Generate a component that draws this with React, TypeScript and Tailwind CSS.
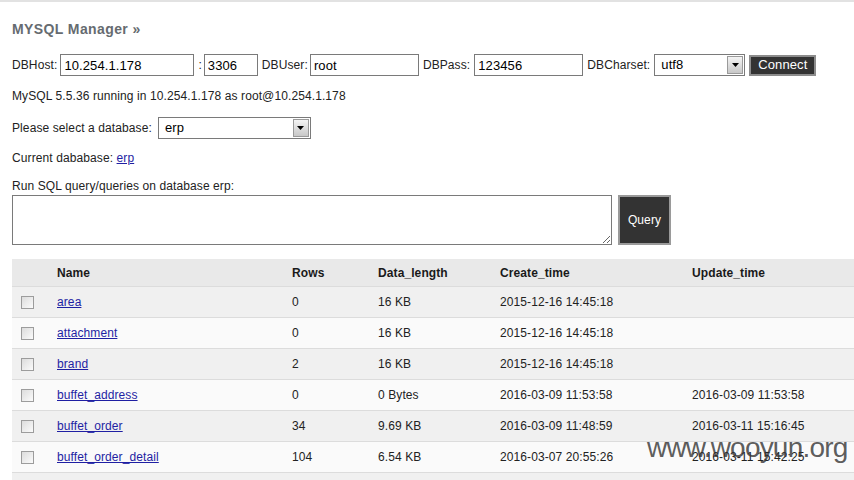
import React from 'react';

type Row = { name: string; rows: string; size: string; created: string; updated: string };

const tables: Row[] = [
  { name: 'area', rows: '0', size: '16 KB', created: '2015-12-16 14:45:18', updated: '' },
  { name: 'attachment', rows: '0', size: '16 KB', created: '2015-12-16 14:45:18', updated: '' },
  { name: 'brand', rows: '2', size: '16 KB', created: '2015-12-16 14:45:18', updated: '' },
  { name: 'buffet_address', rows: '0', size: '0 Bytes', created: '2016-03-09 11:53:58', updated: '2016-03-09 11:53:58' },
  { name: 'buffet_order', rows: '34', size: '9.69 KB', created: '2016-03-09 11:48:59', updated: '2016-03-11 15:16:45' },
  { name: 'buffet_order_detail', rows: '104', size: '6.54 KB', created: '2016-03-07 20:55:26', updated: '2016-03-11 15:42:25' },
];

const cols = 'grid grid-cols-[45px_235px_86px_122px_192px_1fr] items-center';

function TextBox({ value, width }: { value: string; width: string }) {
  return (
    <input
      readOnly
      value={value}
      className={`${width} h-[22px] border border-[#7a7a7a] bg-white px-[3px] text-[13px] text-black outline-none`}
    />
  );
}

function Dropdown({ value, width }: { value: string; width: string }) {
  return (
    <div className={`${width} flex h-[22px] items-stretch border border-[#7a7a7a] bg-white`}>
      <span className="flex-1 pl-[6px] text-[13px] leading-[20px] text-black">{value}</span>
      <span className="m-px flex w-[16px] items-center justify-center border border-[#9a9a9a] bg-gradient-to-b from-[#f4f4f4] to-[#c8c8c8]">
        <svg width="7" height="4" viewBox="0 0 7 4">
          <path d="M0 0h7L3.5 4z" fill="#000" />
        </svg>
      </span>
    </div>
  );
}

function CheckBox() {
  return <span className="block h-[13px] w-[13px] border border-[#9c9c9c] bg-gradient-to-br from-[#dcdcdc] to-[#fbfbfb]" />;
}

export default function App() {
  return (
    <div className="relative h-[480px] w-[854px] overflow-hidden bg-white text-[12px] tracking-[0.1px] text-[#222] [font-family:'Liberation_Sans',Arial,sans-serif]">
      <div className="border-t-2 border-[#e2e2e2] pl-3">
        {/* Title */}
        <h1 className="mt-[18px] text-[14px] leading-[18px] font-bold tracking-[0.4px] text-[#666b70]">MYSQL Manager »</h1>

        {/* Connection form */}
        <div className="mt-[16px] flex h-[22px] items-center">
          <span>DBHost:</span>
          <span className="ml-[3px]"><TextBox value="10.254.1.178" width="w-[134px]" /></span>
          <span className="ml-[4px]">:</span>
          <span className="ml-[2px]"><TextBox value="3306" width="w-[54px]" /></span>
          <span className="ml-[4px]">DBUser:</span>
          <span className="ml-[2px]"><TextBox value="root" width="w-[109px]" /></span>
          <span className="ml-[4px]">DBPass:</span>
          <span className="ml-[4px]"><TextBox value="123456" width="w-[109px]" /></span>
          <span className="ml-[4px]">DBCharset:</span>
          <span className="ml-[4px]"><Dropdown value="utf8" width="w-[91px]" /></span>
          <button className="ml-[4px] h-[21px] w-[67px] border-2 border-[#8c8c8c] bg-[#333] text-[13px] leading-[16px] text-white">Connect</button>
        </div>

        <p className="mt-[11px] leading-[18px]">MySQL 5.5.36 running in 10.254.1.178 as root@10.254.1.178</p>

        <div className="mt-[12px] flex h-[22px] items-center">
          <span>Please select a database:</span>
          <span className="ml-[6px]"><Dropdown value="erp" width="w-[153px]" /></span>
        </div>

        <p className="mt-[10px] leading-[18px]">
          Current dababase: <a className="text-[#1f1fa3] underline">erp</a>
        </p>

        <p className="mt-[10px] leading-[18px]">Run SQL query/queries on database erp:</p>

        <div className="flex items-start">
          <textarea className="h-[50px] w-[600px] border border-[#7a7a7a] bg-white outline-none" />
          <button className="ml-[6px] h-[50px] w-[53px] border-2 border-[#9a9a9a] bg-[#333] text-[12px] text-white">Query</button>
        </div>

        {/* Tables list */}
        <div className="mt-[14px]">
          <div className={`${cols} h-[28px] border-b border-[#dcdcdc] bg-[#e9e9e9] font-bold text-[#1a1a1a]`}>
            <span />
            <span>Name</span>
            <span>Rows</span>
            <span>Data_length</span>
            <span>Create_time</span>
            <span>Update_time</span>
          </div>
          {tables.map((t, i) => (
            <div key={t.name} className={`${cols} h-[31px] border-b border-[#dcdcdc] ${i % 2 === 0 ? 'bg-[#f0f0f0]' : 'bg-[#fafafa]'}`}>
              <span className="pl-[9px]"><CheckBox /></span>
              <a className="text-[#1f1fa3] underline">{t.name}</a>
              <span>{t.rows}</span>
              <span>{t.size}</span>
              <span>{t.created}</span>
              <span>{t.updated}</span>
            </div>
          ))}
          <div className="h-[20px] bg-[#f0f0f0]" />
        </div>
      </div>

      {/* watermark */}
      <div className="absolute left-[647px] top-[434px] text-[28px] leading-none tracking-[-0.8px] text-[#333]/80">www.wooyun.org</div>
    </div>
  );
}
